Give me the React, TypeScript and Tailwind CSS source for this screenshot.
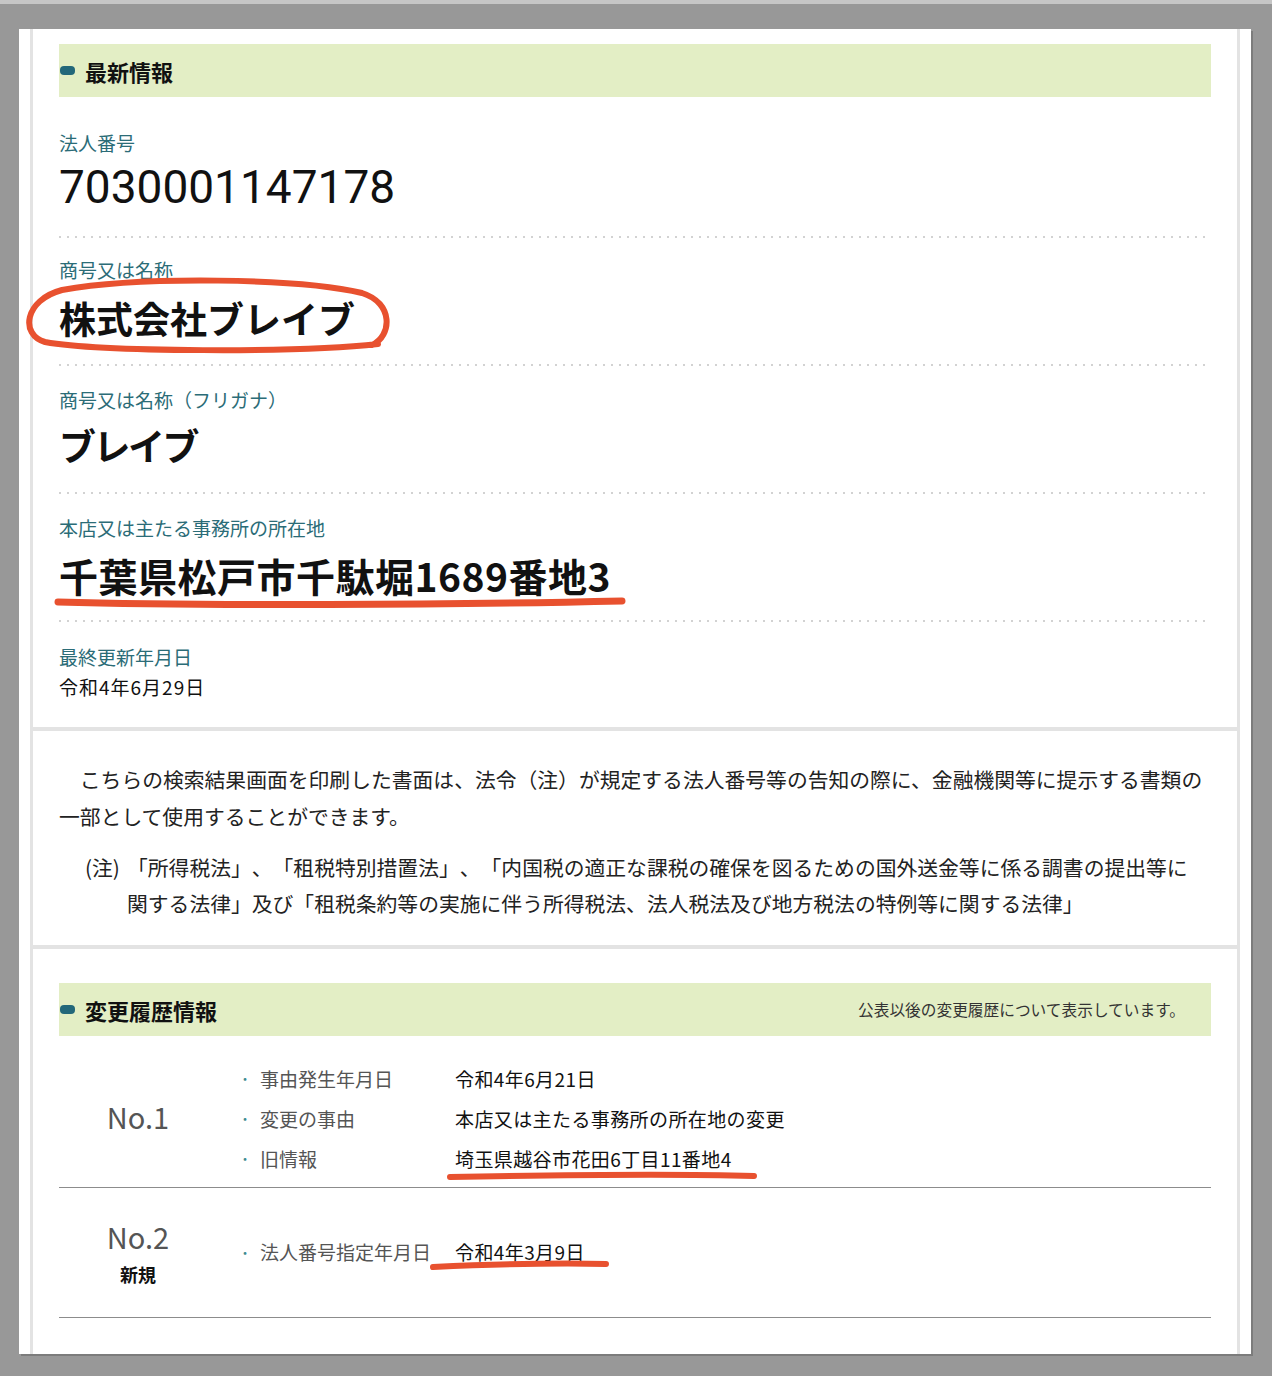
import React from "react";

const FONT = "font-['Noto_Sans_CJK_JP','Noto_Sans',sans-serif]";

function SectionBar({ title, note }: { title: string; note?: string }) {
  return (
    <div className="flex h-[53px] items-center justify-between bg-[#e3eec5] pr-[26px]">
      <div className="flex items-center">
        <span className="ml-[1px] h-[9px] w-[15px] rounded-[4px] bg-[#23687a]" />
        <h2 className="ml-[10px] text-[22px] font-bold leading-none text-[#111]">{title}</h2>
      </div>
      {note ? <p className="whitespace-nowrap text-[15.7px] text-[#333]">{note}</p> : null}
    </div>
  );
}

function Dots() {
  return (
    <div className="h-[2px] w-full bg-[linear-gradient(to_right,#d2d2d2_2px,transparent_2px)] bg-[length:8px_2px] bg-repeat-x" />
  );
}

function Label({ children }: { children: React.ReactNode }) {
  return <p className="h-[24px] text-[19px] leading-[24px] text-[#2b6c77]">{children}</p>;
}

function HistoryItem({ label, value }: { label: string; value: string }) {
  return (
    <div className="flex h-[40px] items-center">
      <span className="w-[20px] text-center text-[13px] text-[#3d8b91]">・</span>
      <span className="ml-[5px] w-[195px] whitespace-nowrap text-[19px] text-[#555]">{label}</span>
      <span className="whitespace-nowrap text-[19px] tracking-[0.4px] text-[#111]">{value}</span>
    </div>
  );
}

export default function App() {
  return (
    <div className={`relative h-[1376px] w-[1272px] overflow-hidden bg-[#989898] ${FONT}`}>
      <div className="h-[4px] bg-[#c6c6c6]" />
      <div className="ml-[19px] mt-[25px] flex h-[1325px] w-[1232px] bg-white px-[11px] shadow-[2px_2px_0_#7c7c7c]">
        <div className="flex h-full w-[1210px] flex-col gap-[4px] bg-[#e3e3e3] px-[3px]">
          {/* 最新情報 */}
          <section className="h-[698px] bg-white px-[26px] pt-[15px]">
            <SectionBar title="最新情報" />

            <div className="pt-[34px]">
              <Label>法人番号</Label>
              <p className="mt-[7px] h-[50px] font-['Roboto',sans-serif] text-[46px] leading-[50px] text-[#111]">
                7030001147178
              </p>
            </div>
            <div className="mt-[24px]">
              <Dots />
            </div>

            <div className="pt-[20px]">
              <Label>商号又は名称</Label>
              <p className="mt-[13px] h-[46px] text-[37px] font-bold leading-[46px] text-[#111]">株式会社ブレイブ</p>
            </div>
            <div className="mt-[23px]">
              <Dots />
            </div>

            <div className="pt-[22px]">
              <Label>商号又は名称（フリガナ）</Label>
              <p className="mt-[10px] h-[46px] text-[37px] font-bold leading-[46px] tracking-[-2.5px] text-[#111]">ブレイブ</p>
            </div>
            <div className="mt-[24px]">
              <Dots />
            </div>

            <div className="pt-[22px]">
              <Label>本店又は主たる事務所の所在地</Label>
              <p className="mt-[12px] h-[46px] whitespace-nowrap text-[39px] font-bold leading-[46px] tracking-[0.5px] text-[#111]">
                千葉県松戸市千駄堀1689番地3
              </p>
            </div>
            <div className="mt-[22px]">
              <Dots />
            </div>

            <div className="pt-[23px]">
              <Label>最終更新年月日</Label>
              <p className="mt-[6px] text-[19px] leading-[24px] tracking-[1px] text-[#111]">令和4年6月29日</p>
            </div>
          </section>

          {/* 注意書き */}
          <section className="h-[214px] bg-white px-[26px] pt-[30px] text-[20.8px] text-[#222] [text-spacing-trim:space-all]">
            <p className="whitespace-nowrap leading-[37px]">
              {"\u3000"}こちらの検索結果画面を印刷した書面は、法令（注）が規定する法人番号等の告知の際に、金融機関等に提示する書類の
              <br />
              一部として使用することができます。
            </p>
            <div className="mt-[14px] flex pl-[26px] leading-[36px]">
              <span className="w-[42px] shrink-0 whitespace-nowrap">(注)</span>
              <p className="whitespace-nowrap">
                「所得税法」、「租税特別措置法」、「内国税の適正な課税の確保を図るための国外送金等に係る調書の提出等に
                <br />
                関する法律」及び「租税条約等の実施に伴う所得税法、法人税法及び地方税法の特例等に関する法律」
              </p>
            </div>
          </section>

          {/* 変更履歴情報 */}
          <section className="flex-1 bg-white px-[26px] pt-[34px]">
            <SectionBar title="変更履歴情報" note="公表以後の変更履歴について表示しています。" />

            <div className="flex items-center border-b border-[#8c8c8c] pb-[8px] pt-[23px]">
              <div className="-mt-[4px] flex w-[158px] justify-center text-[29px] text-[#555]">No.1</div>
              <div className="ml-[18px]">
                <HistoryItem label="事由発生年月日" value="令和4年6月21日" />
                <HistoryItem label="変更の事由" value="本店又は主たる事務所の所在地の変更" />
                <HistoryItem label="旧情報" value="埼玉県越谷市花田6丁目11番地4" />
              </div>
            </div>

            <div className="flex h-[130px] items-center border-b border-[#8c8c8c]">
              <div className="flex w-[158px] flex-col items-center">
                <span className="text-[29px] leading-[34px] text-[#555]">No.2</span>
                <span className="mt-[9px] text-[18px] font-bold leading-[24px] text-[#111]">新規</span>
              </div>
              <div className="ml-[18px]">
                <HistoryItem label="法人番号指定年月日" value="令和4年3月9日" />
              </div>
            </div>
          </section>
        </div>
      </div>

      {/* hand-drawn red annotations */}
      <svg
        className="pointer-events-none absolute left-0 top-0"
        width="1272"
        height="1376"
        viewBox="0 0 1272 1376"
        fill="none"
      >
        <path
          d="M 378 344 C 300 353, 100 352, 45 342 C 20 335, 24 300, 62 290 C 140 276, 300 278, 362 293 C 394 303, 392 336, 372 345"
          stroke="#e8512f"
          strokeWidth="6"
          strokeLinecap="round"
        />
        <path d="M 58 602 C 200 606, 450 605, 622 601" stroke="#e8512f" strokeWidth="7" strokeLinecap="round" />
        <path d="M 450 1177 C 560 1175, 680 1174, 754 1176" stroke="#e8512f" strokeWidth="6" strokeLinecap="round" />
        <path d="M 433 1267 C 500 1264, 560 1263, 606 1264" stroke="#e8512f" strokeWidth="6" strokeLinecap="round" />
      </svg>
    </div>
  );
}
